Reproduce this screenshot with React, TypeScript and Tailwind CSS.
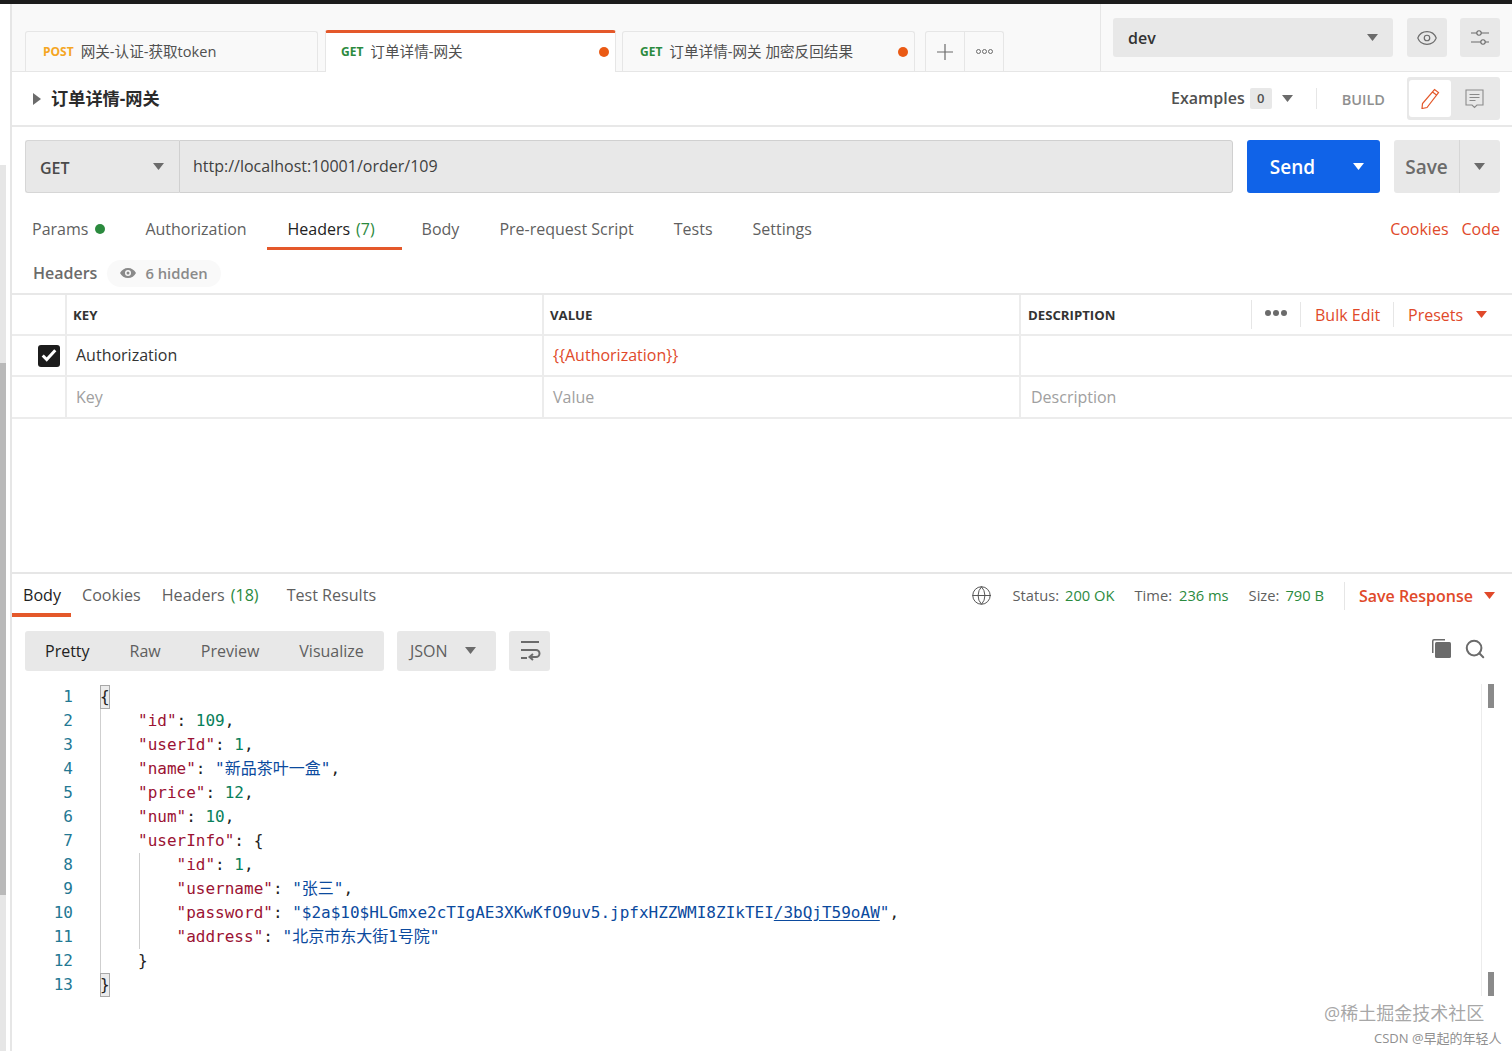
import React from 'react';
import { Eye, Globe, Search } from 'lucide-react';

const Caret = ({ className = 'fill-[#6b6b6b]', w = 11 }: { className?: string; w?: number }) => (
  <svg width={w} height={w * 0.64} viewBox="0 0 11 7" className={className}>
    <path d="M0 0h11L5.5 7z" />
  </svg>
);

const Tab = ({ method, color, name, dirty, active, width }: { method: string; color: string; name: string; dirty?: boolean; active?: boolean; width: string }) => (
  <div className={`${width} flex items-center rounded-t-[3px] ${active ? 'h-[42px] border-t-[3px] border-x border-x-[#e6e6e6] border-t-[#e4582a] bg-white pl-[15px] pr-[6px] pb-[1px]' : 'h-[40px] border border-b-0 border-[#e6e6e6] pl-[17px] pr-[6px] pt-[1px]'}`}>
    <span className={`text-[12px] font-bold mr-[7px] ${color}`}>{method}</span>
    <span className="text-[14.6px] text-[#505050] flex-1 whitespace-nowrap">{name}</span>
    {dirty && <span className="w-[10px] h-[10px] rounded-full bg-[#ea5a14]" />}
  </div>
);

type Seg = [string, string] | [string, string, boolean];
const K = 'text-[#9b1233]';
const N = 'text-[#09805a]';
const S = 'text-[#0b4a9e]';
const P = 'text-[#222222]';

const lines: { indent: number; segs: Seg[]; match?: boolean }[] = [
  { indent: 0, segs: [['{', P]], match: true },
  { indent: 1, segs: [['"id"', K], [': ', P], ['109', N], [',', P]] },
  { indent: 1, segs: [['"userId"', K], [': ', P], ['1', N], [',', P]] },
  { indent: 1, segs: [['"name"', K], [': ', P], ['"新品茶叶一盒"', S], [',', P]] },
  { indent: 1, segs: [['"price"', K], [': ', P], ['12', N], [',', P]] },
  { indent: 1, segs: [['"num"', K], [': ', P], ['10', N], [',', P]] },
  { indent: 1, segs: [['"userInfo"', K], [': {', P]] },
  { indent: 2, segs: [['"id"', K], [': ', P], ['1', N], [',', P]] },
  { indent: 2, segs: [['"username"', K], [': ', P], ['"张三"', S], [',', P]] },
  { indent: 2, segs: [['"password"', K], [': ', P], ['"$2a$10$HLGmxe2cTIgAE3XKwKfO9uv5.jpfxHZZWMI8ZIkTEI', S], ['/3bQjT59oAW', S, true], ['"', S], [',', P]] },
  { indent: 2, segs: [['"address"', K], [': ', P], ['"北京市东大街1号院"', S]] },
  { indent: 1, segs: [['}', P]] },
  { indent: 0, segs: [['}', P]], match: true },
];

const App = () => {
  return (
    <div className="relative w-[1512px] h-[1051px] overflow-hidden bg-white flex flex-col font-['Open_Sans','Noto_Sans_CJK_SC',sans-serif]">
      <div className="h-1 bg-[#1c1c1c] shrink-0" />
      <div className="flex flex-1 min-h-0">
        {/* left rail with scrollbar */}
        <div className="w-[12px] shrink-0 border-r-2 border-[#e6e6e6] bg-white flex flex-col">
          <div className="h-[161px]" />
          <div className="flex-1 w-[6px] bg-[#e6e6e6] flex flex-col">
            <div className="h-[198px]" />
            <div className="h-[532px] bg-[#b9b9b9]" />
          </div>
        </div>

        <div className="flex-1 min-w-0 flex flex-col">
          {/* tab bar */}
          <div className="h-[68px] shrink-0 bg-[#f9f9f9] border-b border-[#e6e6e6] flex">
            <div className="flex-1 flex items-end pl-[13px] gap-[7px] relative">
              <Tab width="w-[293px]" method="POST" color="text-[#f5a623]" name="网关-认证-获取token" />
              <div className="-mb-px">
                <Tab width="w-[291px]" method="GET" color="text-[#2b8a3e]" name="订单详情-网关" dirty active />
              </div>
              <div className="-ml-px">
                <Tab width="w-[293px]" method="GET" color="text-[#2b8a3e]" name="订单详情-网关 加密反回结果" dirty />
              </div>
              <div className="ml-[3px] flex h-[40px] w-[79px] border border-b-0 border-[#e6e6e6] rounded-t-[3px]">
                <div className="w-[39px] border-r border-[#e6e6e6] flex items-center justify-center">
                  <svg width="16" height="16" viewBox="0 0 16 16" className="stroke-[#6b6b6b]" fill="none"><path d="M8 0v16M0 8h16" strokeWidth="1.2" /></svg>
                </div>
                <div className="flex-1 flex items-center justify-center gap-[1px]">
                  {[0, 1, 2].map((i) => (
                    <span key={i} className="w-[5px] h-[5px] rounded-full border border-[#6b6b6b]" />
                  ))}
                </div>
              </div>
            </div>
            <div className="w-[412px] border-l border-[#e6e6e6] flex items-start pt-[14px] pl-[12px] pr-[12px] gap-[14px]">
              <div className="w-[280px] h-[39px] bg-[#e8e8e8] rounded-[3px] flex items-center justify-between pl-[15px] pr-[15px]">
                <span className="text-[16px] font-semibold text-[#333333]">dev</span>
                <Caret />
              </div>
              <div className="w-[40px] h-[39px] bg-[#e8e8e8] rounded-[3px] flex items-center justify-center">
                <Eye size={22} strokeWidth={1.3} className="text-[#6b6b6b]" />
              </div>
              <div className="-ml-px w-[40px] h-[39px] bg-[#e8e8e8] rounded-[3px] flex items-center justify-center">
                <svg width="20" height="16" viewBox="0 0 20 16" fill="none" className="stroke-[#6b6b6b]" strokeWidth="1.1">
                  <path d="M1 3h6M11 3h8M1 12h10M15 12h4" />
                  <circle cx="9" cy="3" r="2.2" />
                  <circle cx="13" cy="12" r="2.2" />
                </svg>
              </div>
            </div>
          </div>

          {/* title row */}
          <div className="h-[55px] shrink-0 border-b-2 border-[#e8e8e8] flex items-center pl-[21px] pr-[12px]">
            <svg width="8" height="12" viewBox="0 0 8 12" className="fill-[#6b6b6b] mr-[10px]"><path d="M0 0l8 6-8 6z" /></svg>
            <span className="text-[17.2px] font-bold text-[#2b2b2b]">订单详情-网关</span>
            <div className="ml-auto flex items-center">
              <span className="text-[16px] font-semibold text-[#505050] pb-[2px]">Examples</span>
              <span className="ml-[5px] w-[22px] h-[21px] bg-[#e8e8e8] rounded-[2px] text-[13px] font-semibold text-[#505050] flex items-center justify-center">0</span>
              <span className="ml-[10px]"><Caret /></span>
              <span className="ml-[23px] w-px h-[21px] bg-[#e6e6e6]" />
              <span className="ml-[25px] text-[14.5px] font-semibold text-[#8f8f8f] pt-[2px]">BUILD</span>
              <div className="ml-[22px] w-[93px] h-[43px] bg-[#e8e8e8] rounded-[3px] flex items-center p-[2px]">
                <div className="w-[42px] h-[37px] bg-white rounded-[3px] flex items-center justify-center">
                  <svg width="20" height="21" viewBox="0 0 20 21" fill="none" className="stroke-[#e4582a]" strokeWidth="1.2">
                    <path d="M14.5 1.5l4 3L7 19.5l-5 1 .5-5zM12.5 4l4 3" />
                  </svg>
                </div>
                <div className="flex-1 flex items-center justify-center">
                  <svg width="19" height="20" viewBox="0 0 19 20" fill="none" className="stroke-[#8a8a8a]" strokeWidth="1.1">
                    <path d="M1 1h17v15h-6l-2.500 2.500L7 16H1zM4.500 5.500h10M4.500 8.500h10M4.500 11.500h6" />
                  </svg>
                </div>
              </div>
            </div>
          </div>

          {/* url row */}
          <div className="shrink-0 pt-[13px] pl-[13px] pr-[12px] flex">
            <div className="w-[154px] h-[53px] bg-[#e8e8e8] border border-[#d6d6d6] border-r-0 rounded-l-[3px] flex items-center justify-between pl-[14px] pr-[15px]">
              <span className="text-[16px] font-semibold text-[#4a4a4a] pt-[2px]">GET</span>
              <Caret />
            </div>
            <div className="w-[1054px] h-[53px] bg-[#e8e8e8] border border-[#d0d0d0] rounded-r-[3px] flex items-center pl-[13px] pb-[1px] text-[16px] text-[#404040]">
              http://localhost:10001/order/109
            </div>
            <div className="ml-[14px] w-[133px] h-[53px] bg-[#1063e8] rounded-[3px] flex items-center text-white">
              <span className="w-[91px] text-center text-[19px] font-semibold pt-[2px]">Send</span>
              <span className="w-[40px] flex justify-center"><Caret className="fill-white" /></span>
            </div>
            <div className="ml-[14px] w-[106px] h-[53px] bg-[#e8e8e8] rounded-[3px] flex items-center text-[#6b6b6b]">
              <span className="w-[66px] h-full flex items-center justify-center text-[19px] font-semibold border-r border-[#d6d6d6] pt-[2px]">Save</span>
              <span className="flex-1 flex justify-center pr-[2px]"><Caret /></span>
            </div>
          </div>

          {/* request tabs */}
          <div className="h-[58px] shrink-0 pl-[20px] pr-[12px] flex items-start text-[16px] text-[#5f5f5f]">
            <div className="flex items-center h-[54px] pt-[18px] mr-[40px]">
              <span>Params</span>
              <span className="ml-[7px] w-[10px] h-[10px] rounded-full bg-[#2b8a3e]" />
            </div>
            <div className="flex items-center h-[54px] pt-[18px] mr-[20px]">Authorization</div>
            <div className="flex items-center justify-center h-[57px] w-[135px] pt-[18px] pr-[6px] mr-[20px] border-b-[3px] border-[#e4582a] text-[#222222]">
              Headers<span className="ml-[6px] text-[#2b8a3e]">(7)</span>
            </div>
            <div className="flex items-center h-[54px] pt-[18px] mr-[40px]">Body</div>
            <div className="flex items-center h-[54px] pt-[18px] mr-[40px]">Pre-request Script</div>
            <div className="flex items-center h-[54px] pt-[18px] mr-[40px]">Tests</div>
            <div className="flex items-center h-[54px] pt-[18px]">Settings</div>
            <div className="ml-auto flex items-center h-[54px] pt-[18px] gap-[13px] text-[#e0492a]">
              <span>Cookies</span>
              <span>Code</span>
            </div>
          </div>

          {/* headers label */}
          <div className="h-[42px] shrink-0 pl-[21px] flex items-center pt-[2px]">
            <span className="text-[16px] font-semibold text-[#6b6b6b]">Headers</span>
            <span className="ml-[10px] h-[27px] w-[114px] rounded-full bg-[#f9f9f9] flex items-center pl-[13px] text-[14.800px] font-semibold text-[#8a8a8a]">
              <svg width="16" height="10" viewBox="0 0 16 10" className="fill-[#8a8a8a] mr-[9px]">
                <path fillRule="evenodd" d="M8 0c3.500 0 6.500 2 8 5-1.500 3-4.500 5-8 5S1.500 8 0 5c1.500-3 4.500-5 8-5zm0 2a3 3 0 100 6 3 3 0 000-6zm0 1.500a1.500 1.500 0 110 3 1.500 1.500 0 010-3z" />
              </svg>
              6 hidden
            </span>
          </div>

          {/* table */}
          <div className="shrink-0 border-t-2 border-[#e8e8e8] grid grid-cols-[55px_477px_477px_1fr] grid-rows-[41px_41px_42px] text-[16px]">
            <div className="border-b-2 border-r-2 border-[#ececec]" />
            <div className="border-b-2 border-r-2 border-[#ececec] flex items-center pl-[6px] pt-[2px] text-[13.200px] font-bold text-[#333333]">KEY</div>
            <div className="border-b-2 border-r-2 border-[#ececec] flex items-center pl-[6px] pt-[2px] text-[13.200px] font-bold text-[#333333]">VALUE</div>
            <div className="border-b-2 border-[#ececec] flex items-center pl-[7px]">
              <span className="w-[223px] text-[13.200px] font-bold text-[#333333] pt-[2px]">DESCRIPTION</span>
              <span className="h-[29px] border-l border-[#e6e6e6] w-[49px] flex items-center justify-center gap-[2px] pb-[3px]">
                {[0, 1, 2].map((i) => (
                  <span key={i} className="w-[6px] h-[6px] rounded-full bg-[#6b6b6b]" />
                ))}
              </span>
              <span className="h-[25px] border-l border-[#e6e6e6] w-[93px] pl-[14px] flex items-center text-[#e0492a]">Bulk Edit</span>
              <span className="h-[25px] border-l border-[#e6e6e6] pl-[14px] flex items-center text-[#e0492a]">
                Presets
                <span className="ml-[13px]"><Caret className="fill-[#e0492a]" /></span>
              </span>
            </div>

            <div className="border-b-2 border-r-2 border-[#ececec] flex items-center pl-[26px]">
              <span className="w-[22px] h-[22px] rounded-[3px] bg-[#1c1c1c] flex items-center justify-center">
                <svg width="16" height="13" viewBox="0 0 14 11" fill="none" className="stroke-white" strokeWidth="2.600"><path d="M1.500 5.500l3.500 3.500 7.500-8" /></svg>
              </span>
            </div>
            <div className="border-b-2 border-r-2 border-[#ececec] flex items-center pl-[9px] pb-[1px] text-[#333333]">Authorization</div>
            <div className="border-b-2 border-r-2 border-[#ececec] flex items-center pl-[9px] pb-[1px] text-[#e0492a]">{'{{Authorization}}'}</div>
            <div className="border-b-2 border-[#ececec]" />

            <div className="border-b-2 border-r-2 border-[#ececec]" />
            <div className="border-b-2 border-r-2 border-[#ececec] flex items-center pl-[9px] text-[#a0a0a0]">Key</div>
            <div className="border-b-2 border-r-2 border-[#ececec] flex items-center pl-[9px] text-[#a0a0a0]">Value</div>
            <div className="border-b-2 border-[#ececec] flex items-center pl-[10px] text-[#a0a0a0]">Description</div>
          </div>

          <div className="h-[155px] shrink-0 border-b-2 border-[#e6e6e6]" />

          {/* response tabs */}
          <div className="h-[43px] shrink-0 flex text-[16.100px] text-[#5f5f5f]">
            <div className="w-[59px] h-full pl-[11px] pt-[4px] flex items-center border-b-[4px] border-[#e4582a] text-[#222222]">Body</div>
            <div className="ml-[11px] flex items-center">Cookies</div>
            <div className="ml-[21px] flex items-center">Headers<span className="ml-[6px] text-[#2b8a3e]">(18)</span></div>
            <div className="ml-[28px] flex items-center">Test Results</div>
            <div className="ml-auto flex items-center pr-[17px] text-[14.700px]">
              <Globe size={21} strokeWidth={1.1} className="text-[#505050] mr-[20px]" />
              <span>Status:</span>
              <span className="ml-[6px] text-[#2b8a3e]">200 OK</span>
              <span className="ml-[20px]">Time:</span>
              <span className="ml-[7px] text-[#2b8a3e]">236 ms</span>
              <span className="ml-[20px]">Size:</span>
              <span className="ml-[6px] text-[#2b8a3e]">790 B</span>
              <span className="ml-[20px] h-[28px] border-l border-[#e6e6e6]" />
              <span className="ml-[14px] text-[16px] font-semibold text-[#e0492a]">Save Response</span>
              <span className="ml-[11px]"><Caret className="fill-[#e0492a]" /></span>
            </div>
          </div>

          {/* response toolbar */}
          <div className="h-[67px] shrink-0 pt-[14px] pl-[13px] pr-[26px] flex items-start text-[16px]">
            <div className="w-[359px] h-[40px] bg-[#e8e8e8] rounded-[3px] flex items-center text-[#5f5f5f]">
              <span className="ml-[20px] text-[#222222]">Pretty</span>
              <span className="ml-[40px]">Raw</span>
              <span className="ml-[40px]">Preview</span>
              <span className="ml-[40px]">Visualize</span>
            </div>
            <div className="ml-[13px] w-[99px] h-[40px] bg-[#e8e8e8] rounded-[3px] flex items-center justify-between pl-[13px] pr-[20px] text-[#5f5f5f]">
              <span>JSON</span>
              <Caret />
            </div>
            <div className="ml-[13px] w-[41px] h-[40px] bg-[#e8e8e8] rounded-[3px] flex items-center justify-center">
              <svg width="24" height="22" viewBox="0 0 24 22" fill="none" className="stroke-[#6b6b6b]" strokeWidth="2">
                <path d="M3 2h18M3 10h15a3.500 3.500 0 010 7h-5M3 18h6M15 14l-3.500 3 3.500 3" />
              </svg>
            </div>
            <div className="ml-auto flex items-center gap-[12px] pt-[7px]">
              <svg width="20" height="20" viewBox="0 0 20 20" className="fill-[#6b6b6b]">
                <path d="M0 2a2 2 0 012-2h11v1.500H2A.5.500 0 001.500 2v12H0z" />
                <rect x="3" y="3" width="16" height="16" rx="1.500" />
              </svg>
              <Search size={22} strokeWidth={2.2} className="text-[#6b6b6b]" />
            </div>
          </div>

          {/* code */}
          <div className="flex-1 min-h-0 flex">
            <div className="flex-1 min-w-0 pt-[1px] text-[16px] font-['DejaVu_Sans_Mono','Noto_Sans_CJK_SC',monospace]">
              {lines.map((line, i) => (
                <div key={i} className="h-6 flex leading-6">
                  <div className="w-[61px] text-right text-[#237893]">{i + 1}</div>
                  <div className="ml-[27px] flex whitespace-pre">
                    {Array.from({ length: line.indent }).map((_, j) => (
                      <span key={j} className="w-[4ch] h-6 border-l border-[#cfcfcf]" />
                    ))}
                    <span className={line.match ? 'bg-[#ececec] outline outline-[#a8a8a8] -outline-offset-1' : '-ml-[0.5px]'}>
                      {line.segs.map((seg, j) => (
                        <span key={j} className={`${seg[1]} ${seg[2] ? 'underline underline-offset-2' : ''}`}>{seg[0]}</span>
                      ))}
                    </span>
                  </div>
                </div>
              ))}
            </div>
            <div className="w-[31px] h-[312px] border-l border-[#ececec] shrink-0 flex flex-col justify-between pl-[6px]">
              <div className="w-[6px] h-6 bg-[#8a8a8a]" />
              <div className="w-[6px] h-6 bg-[#8a8a8a]" />
            </div>
          </div>
        </div>
      </div>

      {/* image watermark */}
      <div className="absolute left-[1324px] top-[1001px] text-[18px] leading-[24px] text-[#8f8f8f]/80 whitespace-nowrap">@稀土掘金技术社区</div>
      <div className="absolute left-[1374px] top-[1030px] text-[13px] leading-[16px] text-[#8f8f8f] whitespace-nowrap">CSDN @早起的年轻人</div>
    </div>
  );
};

export default App;
